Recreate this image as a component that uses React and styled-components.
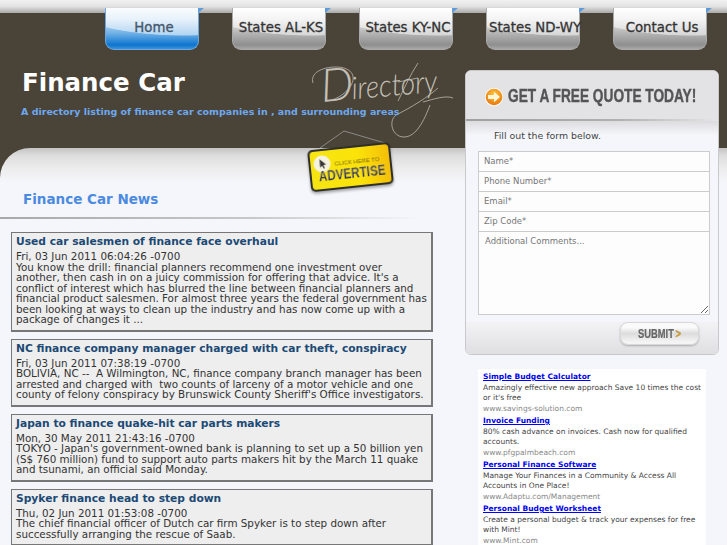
import React from "react";
import styled, { createGlobalStyle } from "styled-components";

const Global = createGlobalStyle`
  html, body { margin: 0; padding: 0; background: #f5f6fb; }
  body { font-family: "DejaVu Sans", Verdana, sans-serif; }
  * { box-sizing: border-box; }
`;
const Page = styled.div`
  position: relative; width: 727px; height: 545px; overflow: hidden;
  background: #4a4338; display: flex; flex-direction: column;
`;
const TopStrip = styled.div`
  height: 13px; flex: none;
  background: linear-gradient(#f2f2f2 0%, #e2e2e2 50%, #a9a9a9 100%);
`;
const Header = styled.header`
  height: 135px; flex: none; background: #4a4338; position: relative;
`;
const Nav = styled.nav`
  display: flex; gap: 33px; padding-left: 105px; margin-top: -5px;
  position: relative; z-index: 2;
`;
const Tab = styled.a`
  position: relative; width: 94px; height: 42px; display: flex; align-items: center; justify-content: center;
  padding: 0 0 3px 4px;
  border-radius: 0 0 9px 9px; font-size: 13.3px; white-space: nowrap; -webkit-text-stroke: 0.3px currentColor;
  color: ${p => (p.$active ? "#44566a" : "#333")};
  border: 1px solid ${p => (p.$active ? "#6aa9e4" : "#aaa")};
  border-top: 0;
  background:
    radial-gradient(120px 34px at 85% -15%, rgba(255,255,255,.5) 0 98%, transparent 100%),
    ${p => p.$active
      ? "linear-gradient(#f4faff 0%, #cfe4f6 28%, #6fb0e6 62%, #0d74cf 90%, #3d93dc 100%)"
      : "linear-gradient(#fff 0%, #e8e8e8 28%, #b4b4b4 62%, #8e8e8e 90%, #a8a8a8 100%)"};
  &::after {
    content: ""; position: absolute; left: 100%; top: 0; border-top: 5px solid #5d9bdc;
    border-right: 6px solid transparent;
  }
`;
const Brand = styled.div`
  padding: 17px 0 0 22px; position: relative; z-index: 1;
`;
const Title = styled.h1`
  margin: 0; font-size: 24.5px; line-height: 32px; font-weight: 700; color: #fff;
`;
const Tagline = styled.p`
  margin: 6px 0 0 -1px; font-size: 9.5px; line-height: 14px; font-weight: 700; color: #6ea8ee; white-space: nowrap;
`;
const ScriptLogo = styled.svg`
  position: absolute; left: 300px; top: 42px; width: 165px; height: 90px; overflow: visible;
`;
const Body = styled.div`
  flex: 1; display: flex; min-height: 0; position: relative; border-radius: 30px 0 0 0;
  background: linear-gradient(#c4c4c4 0, #dedede 8px, #ececec 20px, #f5f6fb 34px);
`;
const Main = styled.main`
  width: 465px; flex: none; padding-top: 42px;
`;
const NewsHeading = styled.h2`
  margin: 0 0 0 23px; font-size: 13.5px; line-height: 18px; font-weight: 700; color: #4a8ae0;
`;
const Rule = styled.div`
  height: 2px; width: 420px; margin-top: 9px;
  background: linear-gradient(90deg, #a8a8a8, #c8c8c8 60%, #f5f6fb);
`;
const List = styled.div`
  display: flex; flex-direction: column; gap: 7px; margin: 13px 0 0 11px; width: 422px;
`;
const Article = styled.article`
  border: 2px solid #777; border-width: 1px 2px 2px 1px; background: #eee; padding: 2px 2px 5px 4px;
  font-size: 10.35px; line-height: 10.5px; color: #333; white-space: pre-wrap;
`;
const ArticleTitle = styled.h3`
  margin: 0 0 2px; font-size: 10.7px; line-height: 14px; font-weight: 700; color: #1c4a75;
`;
const Side = styled.aside`
  width: 254px; margin: -78px 0 0 0; position: relative; z-index: 2; flex: none;
`;
const Panel = styled.section`
  height: 285px; border: 1px solid #c9c9cb; border-radius: 6px; overflow: hidden;
  display: flex; flex-direction: column; background: #f5f6fb;
`;
const PanelHead = styled.div`
  height: 50px; flex: none; background: #e3e3e6; display: flex; align-items: center; gap: 4px; padding: 3px 0 0 18px;
  border-bottom: 2px solid; border-image: linear-gradient(90deg, #a0a0a0, #b0b0b0 60%, #e6e6e8) 1;
  svg { flex: none; }
`;
const PanelTitle = styled.div`
  font-family: "Liberation Sans", sans-serif; font-size: 18px; font-weight: 700; color: #555;
  white-space: nowrap; transform: scaleX(.76); transform-origin: left center; -webkit-text-stroke: 0.4px #555;
`;
const Hint = styled.p`
  margin: 0; padding: 0 0 0 28px; font-size: 9.4px; line-height: 30px; height: 30px; color: #444;
  background: linear-gradient(#dcdcde, #f5f6fb 14px);
`;
const Fields = styled.div`
  display: flex; flex-direction: column; margin: 0 8px 0 12px;
`;
const Field = styled.input`
  height: 20px; width: 100%; border: 1px solid #ccc; border-bottom-width: 0; background: #fdfdfe; padding: 0 5px 2px;
  font: 8.5px "DejaVu Sans", sans-serif; color: #777; outline: none; display: block; margin: 0; border-radius: 0;
  &::placeholder { color: #777; opacity: 1; }
`;
const Comments = styled.textarea`
  height: 84px; width: 100%; border: 1px solid #ccc; background: #fdfdfe; padding: 4px 6px; display: block; margin: 0;
  font: 8.5px "DejaVu Sans", sans-serif; outline: none; border-radius: 0;
  &::placeholder { color: #777; opacity: 1; }
`;
const PanelFoot = styled.div`
  flex: 1; margin-top: 7px; display: flex; justify-content: flex-end; align-items: flex-start; padding-right: 19px;
  background: linear-gradient(#f3f3f6, #dfdfe1);
`;
const Submit = styled.button`
  width: 79px; height: 23px; border: 1px solid #d8d8d8; border-radius: 8px; padding: 0; margin: 0;
  display: flex; align-items: center; justify-content: center;
  background: linear-gradient(#fafafa 0, #fafafa 22%, #dcdcdc 50%, #f4f4f4 90%);
  box-shadow: 0 1px 2px rgba(0,0,0,.25);
`;
const SubmitLabel = styled.span`
  font-family: "Liberation Sans", sans-serif; font-weight: 700; font-size: 12px; color: #666;
  -webkit-text-stroke: 0.2px #666; transform: scaleX(.78); white-space: nowrap;
  b { color: #e0a020; margin-left: 2px; }
`;
const Ads = styled.div`
  margin: 14px 0 0 13px; width: 228px; background: #fff; padding: 3px 0 3px 5px; display: flex; flex-direction: column; gap: 1.4px;
  font-size: 7.5px; line-height: 10.65px; color: #444;
`;
const AdLink = styled.a`
  display: block; font-weight: 700; color: #0000ee; text-decoration: underline;
`;
const AdUrl = styled.div`
  color: #888;
`;
const Sign = styled.svg`
  position: absolute; left: 300px; top: 128px; width: 100px; height: 72px; z-index: 3; overflow: visible;
`;

const articles = [
  ["Used car salesmen of finance face overhaul", "Fri, 03 Jun 2011 06:04:26 -0700",
   "You know the drill: financial planners recommend one investment over another, then cash in on a juicy commission for offering that advice. It's a conflict of interest which has blurred the line between financial planners and financial product salesmen. For almost three years the federal government has been looking at ways to clean up the industry and has now come up with a package of changes it ..."],
  ["NC finance company manager charged with car theft, conspiracy", "Fri, 03 Jun 2011 07:38:19 -0700",
   "BOLIVIA, NC --  A Wilmington, NC, finance company branch manager has been arrested and charged with  two counts of larceny of a motor vehicle and one county of felony conspiracy by Brunswick County Sheriff's Office investigators."],
  ["Japan to finance quake-hit car parts makers", "Mon, 30 May 2011 21:43:16 -0700",
   "TOKYO - Japan's government-owned bank is planning to set up a 50 billion yen (S$ 760 million) fund to support auto parts makers hit by the March 11 quake and tsunami, an official said Monday."],
  ["Spyker finance head to step down", "Thu, 02 Jun 2011 01:53:08 -0700",
   "The chief financial officer of Dutch car firm Spyker is to step down after successfully arranging the rescue of Saab."],
];
const ads = [
  ["Simple Budget Calculator", "Amazingly effective new approach Save 10 times the cost or it's free", "www.savings-solution.com"],
  ["Invoice Funding", "80% cash advance on invoices. Cash now for qualified accounts.", "www.pfgpalmbeach.com"],
  ["Personal Finance Software", "Manage Your Finances in a Community & Access All Accounts in One Place!", "www.Adaptu.com/Management"],
  ["Personal Budget Worksheet", "Create a personal budget & track your expenses for free with Mint!", "www.Mint.com"],
];
const tabs = ["Home", "States AL-KS", "States KY-NC", "States ND-WY", "Contact Us"];

export default function App() {
  return (
    <Page>
      <Global />
      <TopStrip />
      <Header>
        <Nav>
          {tabs.map((t, i) => <Tab key={t} $active={i === 0}>{t}</Tab>)}
        </Nav>
        <ScriptLogo viewBox="0 0 165 90">
          <text x="22" y="47" transform="rotate(-5 22 47)" fontFamily="Lato" fontWeight="300" fontStyle="italic" fill="#c4c0b7">
            <tspan fontSize="46">D</tspan>
            <tspan fontSize="31" dx="-2" textLength="86" lengthAdjust="spacingAndGlyphs">irectory</tspan>
          </text>
          <path d="M13 28C10 18 22 12 36 12 50 12 58 20 50 32 44 40 34 46 25 46M118 8C110 20 104 34 98 46M98 27L118 23M138 33C128 42 112 52 96 60 88 66 92 82 104 82 116 82 124 66 130 50M123 47C134 44 146 40 153 43" fill="none" stroke="#bdb9b0" strokeWidth="0.8" />
        </ScriptLogo>
        <Brand>
          <Title>Finance Car</Title>
          <Tagline>A directory listing of finance car companies in , and surrounding areas</Tagline>
        </Brand>
      </Header>
      <Body>
        <Main>
          <NewsHeading>Finance Car News</NewsHeading>
          <Rule />
          <List>
            {articles.map(a => (
              <Article key={a[0]}>
                <ArticleTitle>{a[0]}</ArticleTitle>
                {a[1]}<br />{a[2]}
              </Article>
            ))}
          </List>
        </Main>
        <Side>
          <Panel>
            <PanelHead>
              <svg width="20" height="20" viewBox="0 0 20 20">
                <defs>
                  <radialGradient id="o" cx="50%" cy="35%" r="65%"><stop offset="0" stopColor="#ffc640" /><stop offset="1" stopColor="#e8760c" /></radialGradient>
                </defs>
                <circle cx="10" cy="10" r="9.5" fill="#fff" stroke="#d8d8d8" strokeWidth="0.5" />
                <circle cx="10" cy="10" r="8.3" fill="url(#o)" />
                <path d="M4 8h6V4.8L16 10l-6 5.2V12H4z" fill="#fff6d8" />
              </svg>
              <PanelTitle>GET A FREE QUOTE TODAY!</PanelTitle>
            </PanelHead>
            <Hint>Fill out the form below.</Hint>
            <Fields>
              <Field placeholder="Name*" />
              <Field placeholder="Phone Number*" />
              <Field placeholder="Email*" />
              <Field placeholder="Zip Code*" />
              <Comments placeholder="Additional Comments..." />
            </Fields>
            <PanelFoot>
              <Submit><SubmitLabel>SUBMIT<b>&gt;</b></SubmitLabel></Submit>
            </PanelFoot>
          </Panel>
          <Ads>
            {ads.map(a => (
              <div key={a[0]}>
                <AdLink>{a[0]}</AdLink>
                {a[1]}
                <AdUrl>{a[2]}</AdUrl>
              </div>
            ))}
          </Ads>
        </Side>
      </Body>
      <Sign viewBox="0 0 100 72">
        <defs>
          <linearGradient id="y" x1="0" x2="1" y1="0" y2="0">
            <stop offset="0" stopColor="#f6e412" />
            <stop offset="0.6" stopColor="#fbe30a" />
            <stop offset="1" stopColor="#f4bf08" />
          </linearGradient>
          <linearGradient id="t" x1="0" x2="0" y1="0" y2="1">
            <stop offset="0" stopColor="#555" />
            <stop offset="1" stopColor="#222" />
          </linearGradient>
        </defs>
        <path d="M20 20L44 3L85 15" fill="none" stroke="#8a8a86" strokeWidth="1" />
        <g transform="rotate(-6 51 39)" style={{ filter: "drop-shadow(0 2px 1.5px rgba(0,0,0,.35))" }}>
          <rect x="9" y="18" width="83" height="42" rx="5" fill="#2e2e2a" />
          <rect x="11" y="20" width="79" height="38" rx="3.5" fill="url(#y)" />
          <circle cx="22.5" cy="33" r="8.5" fill="#f5f2df" />
          <path d="M20.5 28l6 6-3 .3 1.5 3-1.2.5-1.5-3-2 1.7z" fill="#333" />
          <text x="35" y="36" fontFamily="Liberation Sans" fontSize="5.8" fill="#7a6a10" textLength="45" lengthAdjust="spacingAndGlyphs">CLICK HERE TO</text>
          <text x="18" y="50" fontFamily="Liberation Sans" fontWeight="700" fontSize="15" fill="url(#t)" stroke="#eee" strokeWidth="0.2" textLength="67" lengthAdjust="spacingAndGlyphs">ADVERTISE</text>
        </g>
      </Sign>
    </Page>
  );
}
